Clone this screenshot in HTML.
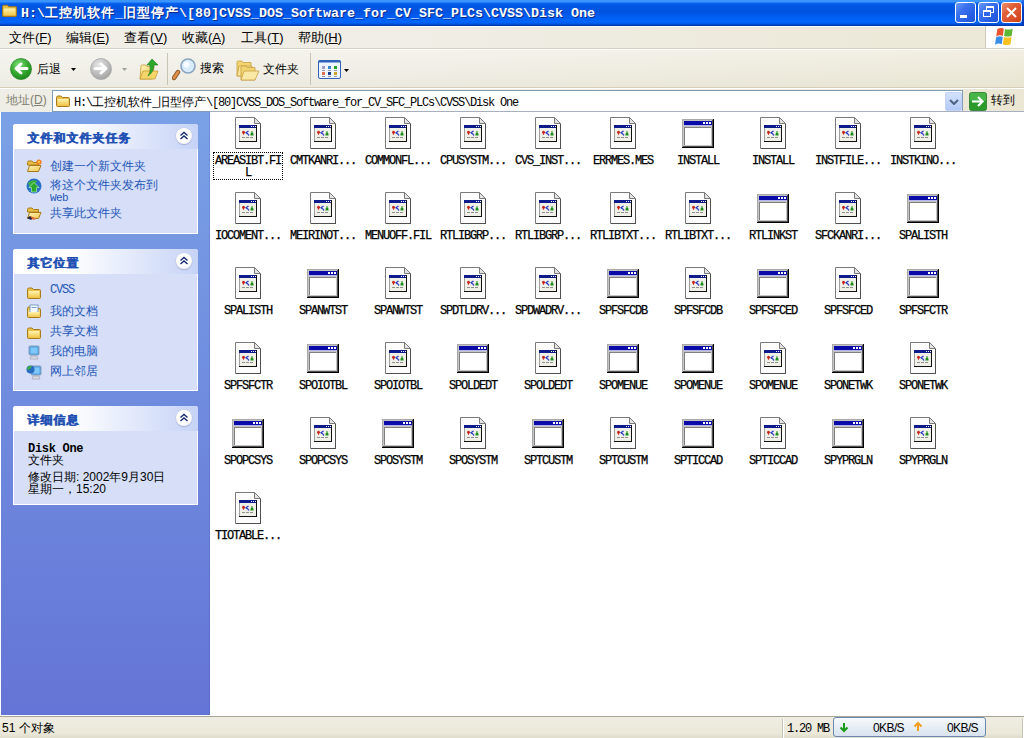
<!DOCTYPE html>
<html><head><meta charset="utf-8">
<style>
*{margin:0;padding:0;box-sizing:border-box}
html,body{width:1024px;height:738px;overflow:hidden;background:#fff;font-family:"Liberation Sans",sans-serif;font-size:12px;color:#000}
.a{position:absolute}
svg{display:block}
#title{left:0;top:0;width:1024px;height:26px;background:linear-gradient(#3c95ff 0px,#3c95ff 2px,#0a66f5 3px,#0058e6 5px,#0053de 12px,#005cf0 16px,#0066fd 22px,#0056e0 24px,#0040b8 25px,#0038a8 26px)}
#title .t{left:21px;top:4px;color:#fff;font:bold 13.33px "Liberation Mono",monospace;white-space:nowrap;text-shadow:1px 1px 0 #0a2a8a}
.cj{letter-spacing:1px}
.tb{top:2px;width:21px;height:21px;border:1px solid #fff;border-radius:3px;background:linear-gradient(135deg,#6a9cf8 0%,#3a72ee 35%,#2860e4 70%,#1f55d8 100%)}
#menu{left:0;top:26px;width:1024px;height:22px;background:linear-gradient(90deg,#f0efe8 0%,#efede4 45%,#ece8d6 100%);border-top:1px solid #f8f8ff}
#menu .m{top:2px;font-size:13px;white-space:nowrap}
#logo{left:985px;top:26px;width:39px;height:22px;background:#fff;border-left:1px solid #d0ccbc}
#tool{left:0;top:48px;width:1024px;height:40px;background:linear-gradient(rgba(255,255,255,0.35),rgba(255,255,255,0.1) 60%,rgba(0,0,0,0.01)),linear-gradient(90deg,#efeee6 0%,#eeece2 40%,#ebe7d4 100%);border-top:1px solid #d4d2c8;box-shadow:inset 0 1px #fdfdf8;border-bottom:1px solid #d6ceb8}
#addr{left:0;top:88px;width:1024px;height:24px;background:linear-gradient(90deg,#efeee6 0%,#eeece2 40%,#ebe7d4 100%);border-top:1px solid #fff}
#side{left:1px;top:112px;width:209px;height:603px;background:linear-gradient(#7aa1e6,#6474d6);box-shadow:inset -1px 0 rgba(20,30,90,0.1)}
#content{left:210px;top:111px;width:814px;height:605px;background:#fff;border-top:1px solid #a8b0c0}
.panel{left:12px;width:185px;background:#d6dff7;border:1px solid #fff;border-top:none;border-radius:3px 3px 0 0}
.ph{position:absolute;left:-1px;top:0;width:185px;height:25px;border-radius:3px 3px 0 0;background:linear-gradient(90deg,#fff 0%,#fff 30%,#c6d3f7 100%)}
.ph .h{position:absolute;left:14px;top:6px;font-weight:bold;color:#1e50b4;font-size:12px;letter-spacing:1px;text-shadow:0.5px 0 0 #1e50b4}
.cb{position:absolute;left:163px;top:4px;width:16px;height:16px;border-radius:50%;background:radial-gradient(circle at 45% 40%,#fff 55%,#eef0fa 75%,#c8cce8);box-shadow:0 0 0 0.5px #c0c4e0,0 1px 1px #a0a8d0}
.it{position:absolute;left:36px;color:#2456b8;white-space:nowrap;font-size:12px}
.si{position:absolute;left:12px}
.ic{position:absolute}
.lab{position:absolute;text-align:center;font:12px "Liberation Mono",monospace;letter-spacing:-1.2px;-webkit-text-stroke:0.25px #000;line-height:12px;white-space:nowrap;color:#000}
.focus{border:1px dotted #000;padding-top:2px;line-height:12px}
#status{left:0;top:716px;width:1024px;height:22px;background:linear-gradient(#efede2,#ebe8d9 80%,#dedbcb);border-top:1px solid #a9a595}
</style></head><body>
<svg width="0" height="0" style="position:absolute">
<defs>
<linearGradient id="fy" x1="0" y1="0" x2="0" y2="1"><stop offset="0" stop-color="#fff3b0"/><stop offset="1" stop-color="#f2c64a"/></linearGradient>
<linearGradient id="fy2" x1="0" y1="0" x2="1" y2="1"><stop offset="0" stop-color="#fff6c0"/><stop offset="1" stop-color="#f0c248"/></linearGradient>
<radialGradient id="gg" cx="0.4" cy="0.3" r="0.7"><stop offset="0" stop-color="#7ee07a"/><stop offset="0.6" stop-color="#36a830"/><stop offset="1" stop-color="#1f8a1f"/></radialGradient>
<radialGradient id="gr" cx="0.4" cy="0.3" r="0.7"><stop offset="0" stop-color="#e8e8e8"/><stop offset="0.6" stop-color="#bdbdbd"/><stop offset="1" stop-color="#a4a4a4"/></radialGradient>
<symbol id="doc" viewBox="0 0 32 32">
 <path d="M3.5 0.5H22.5L28.5 6.5V31.5H3.5Z" fill="#fcfcfc" stroke="#7a7a7a"/>
 <path d="M22.5 0.5V6.5H28.5Z" fill="#e4e4e4" stroke="#7a7a7a" stroke-linejoin="bevel"/>
 <rect x="4" y="31" width="25" height="1" fill="#505050"/>
 <rect x="28" y="7" width="1" height="25" fill="#505050"/>
 <rect x="7" y="8" width="17" height="16" fill="#f0efe8"/>
 <rect x="7" y="8" width="1" height="16" fill="#a0a0a0"/>
 <rect x="7" y="8" width="17" height="3" fill="#0c1a8c"/>
 <rect x="19" y="9" width="1" height="1" fill="#fff"/><rect x="21" y="9" width="1" height="1" fill="#fff"/><rect x="23" y="9" width="1" height="1" fill="#fff"/>
 <rect x="24" y="8" width="1" height="17" fill="#111"/><rect x="7" y="24" width="18" height="1" fill="#111"/>
 <path d="M10 15.3a1.5 1.5 0 1 1 3 0l-1.5 3z" fill="#c8281c"/>
 <path d="M16.5 14l-2.5 1.8 2.5 1.8" fill="none" stroke="#2232c0" stroke-width="1.2"/>
 <circle cx="16.6" cy="18" r="0.7" fill="#2232c0"/>
 <path d="M18.5 18.5v-1.8l1-1.2v-1.5h1v1.5l1 1.2v1.8z" fill="#1a901a"/>
 <rect x="10" y="20" width="3" height="1" fill="#909090"/><rect x="14" y="20" width="3" height="1" fill="#909090"/><rect x="18" y="20" width="3" height="1" fill="#909090"/>
</symbol>
<symbol id="win" viewBox="0 0 32 32">
 <rect x="0" y="2" width="32" height="29" fill="#c4c4c4"/>
 <rect x="0" y="2" width="31" height="1" fill="#a8a8a8"/>
 <rect x="0" y="2" width="1" height="28" fill="#a8a8a8"/>
 <rect x="30" y="3" width="1" height="27" fill="#505050"/>
 <rect x="1" y="29" width="30" height="1" fill="#505050"/>
 <rect x="31" y="2" width="1" height="29" fill="#000"/>
 <rect x="0" y="30" width="32" height="1" fill="#000"/>
 <rect x="2" y="4" width="28" height="4" fill="#0a0aa8"/>
 <rect x="2" y="8" width="28" height="1" fill="#b4b4f0"/>
 <rect x="21" y="5" width="2" height="2" fill="#fff"/><rect x="24" y="5" width="2" height="2" fill="#fff"/><rect x="27" y="5" width="2" height="2" fill="#fff"/>
 <rect x="2" y="10" width="27" height="1" fill="#808080"/>
 <rect x="2" y="10" width="1" height="18" fill="#808080"/>
 <rect x="3" y="11" width="26" height="17" fill="#fff"/>
</symbol>
<symbol id="fold" viewBox="0 0 16 16">
 <path d="M1.5 4.5 Q1.5 3 3 3H6l1.5 1.5H13.5Q14.5 4.5 14.5 5.5V12.5Q14.5 13.5 13.5 13.5H2.5Q1.5 13.5 1.5 12.5Z" fill="#e9c046" stroke="#a87a1c"/>
 <rect x="2.5" y="6" width="11" height="6.5" rx="0.5" fill="url(#fy)"/>
</symbol>
<symbol id="ofold" viewBox="0 0 16 16">
 <path d="M1.5 4.5Q1.5 3 3 3H6l1.5 1.5H12.5V7H1.5Z" fill="#e9c046" stroke="#a87a1c"/>
 <path d="M1.5 13.5L3.5 7.5H15L12.5 13.5Z" fill="url(#fy2)" stroke="#a87a1c"/>
</symbol>
<symbol id="chev" viewBox="0 0 16 16">
 <path d="M4.5 7.5l3.5-3 3.5 3M4.5 11l3.5-3 3.5 3" fill="none" stroke="#142a70" stroke-width="1.4"/>
</symbol>
</defs></svg>

<div id="title" class="a">
 <svg class="a" style="left:1px;top:2px" width="17" height="17" viewBox="0 0 16 16"><use href="#fold"/></svg>
 <div class="t a">H:\<span class="cj">工控机软件</span>_<span class="cj">旧型停产</span>\[80]CVSS_DOS_Software_for_CV_SFC_PLCs\CVSS\Disk One</div>
 <div class="a" style="left:1022px;top:0;width:2px;height:26px;background:linear-gradient(#2a70f0,#0040c8 30%,#0036b0)"></div>
 <div class="tb a" style="left:955px"><div class="a" style="left:4px;top:12px;width:7px;height:3px;background:#fff"></div></div>
 <div class="tb a" style="left:978px"><div class="a" style="left:7px;top:3px;width:8px;height:7px;border:1px solid #fff;border-top-width:2px"></div><div class="a" style="left:4px;top:7px;width:8px;height:7px;border:1px solid #fff;border-top-width:2px;background:#2f66e8"></div></div>
 <div class="tb a" style="left:1001px;background:linear-gradient(135deg,#ee9070 0%,#e0603a 35%,#d8502a 70%,#d04010 100%)"><svg class="a" style="left:3px;top:3px" width="13" height="13"><path d="M2 2L11 11M11 2L2 11" stroke="#fff" stroke-width="2"/></svg></div>
</div>
<div id="menu" class="a">
 <div class="m a" style="left:9px">文件(<u>F</u>)</div>
 <div class="m a" style="left:66px">编辑(<u>E</u>)</div>
 <div class="m a" style="left:124px">查看(<u>V</u>)</div>
 <div class="m a" style="left:182px">收藏(<u>A</u>)</div>
 <div class="m a" style="left:241px">工具(<u>T</u>)</div>
 <div class="m a" style="left:298px">帮助(<u>H</u>)</div>
</div>
<div id="logo" class="a">
 <svg class="a" style="left:8px;top:1px" width="22" height="20" viewBox="0 0 20 18" preserveAspectRatio="none">
  <path d="M3 2Q6 0 9 1.5L8 8Q5 6.5 2 8.5Z" fill="#e8542c"/>
  <path d="M10 1.8Q13 3 17 1.5L16 8Q12.5 9 9.2 8Z" fill="#5cb832"/>
  <path d="M1.8 9.5Q5 7.5 8 9L7 15.5Q4 14 1 16Z" fill="#3a8ee8"/>
  <path d="M9 9Q12.5 10 16 9L15 15.5Q11.5 17 8 15.5Z" fill="#f8c020"/>
 </svg>
</div>
<div id="tool" class="a">
 <svg class="a" style="left:10px;top:9px" width="22" height="22" viewBox="0 0 22 22"><circle cx="11" cy="11" r="10.5" fill="url(#gg)" stroke="#2a8a2a" stroke-width="0.8"/><path d="M17 10.5H7M11 6L6 10.5L11 15" fill="none" stroke="#fff" stroke-width="3" stroke-linecap="round" stroke-linejoin="round"/></svg>
 <div class="a" style="left:37px;top:12px">后退</div>
 <svg class="a" style="left:71px;top:19px" width="5" height="3"><path d="M0 0H5L2.5 3Z" fill="#000"/></svg>
 <svg class="a" style="left:90px;top:9px" width="22" height="22" viewBox="0 0 22 22"><circle cx="11" cy="11" r="10.5" fill="url(#gr)" stroke="#a8a8a8" stroke-width="0.8"/><path d="M5 10.5H15M11 6L16 10.5L11 15" fill="none" stroke="#fff" stroke-width="3" stroke-linecap="round" stroke-linejoin="round"/></svg>
 <svg class="a" style="left:122px;top:19px" width="5" height="3"><path d="M0 0H5L2.5 3Z" fill="#a0a0a0"/></svg>
 <svg class="a" style="left:139px;top:9px" width="20" height="22" viewBox="0 0 20 22">
  <path d="M1 21L2 8Q2 7 3 7H7l1 1.5H15L13 21Z" fill="url(#fy2)" stroke="#c89a30" stroke-width="0.8"/>
  <path d="M1 21L4 13H19L16 21Z" fill="#f6d66a" stroke="#c89a30" stroke-width="0.8"/>
  <path d="M9 18Q12 14 11 7H8L13 1L19 7H15Q15 14 9 18Z" fill="#2ca82c" stroke="#1a7a1a" stroke-width="0.6"/>
 </svg>
 <div class="a" style="left:167px;top:4px;width:1px;height:32px;background:#c8c4b4"></div>
 <svg class="a" style="left:172px;top:9px" width="25" height="23" viewBox="0 0 25 23">
  <path d="M6 14L2 20" stroke="#8a5a2a" stroke-width="4.5" stroke-linecap="round"/>
  <path d="M6 14L2 20" stroke="#e0904a" stroke-width="2.5" stroke-linecap="round"/>
  <circle cx="16" cy="8" r="7" fill="#d8ecfc" stroke="#8aa4c0" stroke-width="1.6"/>
  <circle cx="14.5" cy="6.5" r="3" fill="#fff" opacity="0.8"/>
 </svg>
 <div class="a" style="left:200px;top:11px">搜索</div>
 <svg class="a" style="left:236px;top:11px" width="24" height="21" viewBox="0 0 24 21">
  <path d="M1 16V2Q1 1 2 1H6l1 1.5H15V16Z" fill="#f2d470" stroke="#c8a040" stroke-width="0.8"/>
  <path d="M1 16L3 6H16L14 16Z" fill="#f8e49a" stroke="#c8a040" stroke-width="0.8"/>
  <path d="M5 20V7Q5 6 6 6H10l1 1.5H19V20Z" fill="#f2d470" stroke="#c8a040" stroke-width="0.8"/>
  <path d="M5 20L8 11H23L19 20Z" fill="#fae8a6" stroke="#c8a040" stroke-width="0.8"/>
 </svg>
 <div class="a" style="left:263px;top:12px">文件夹</div>
 <div class="a" style="left:310px;top:4px;width:1px;height:32px;background:#c8c4b4"></div>
 <svg class="a" style="left:318px;top:11px" width="24" height="19" viewBox="0 0 24 19">
  <rect x="0.5" y="0.5" width="22" height="18" rx="1.5" fill="#eef5fe" stroke="#2f62b8"/>
  <rect x="0.5" y="0.5" width="22" height="2" fill="#2f62b8"/>
  <rect x="4" y="6" width="3" height="3" fill="#a49ccc"/><rect x="10" y="6" width="3" height="3" fill="#3a82d2"/><rect x="16" y="6" width="3" height="3" fill="#22a022"/>
  <rect x="4" y="12" width="3" height="3" fill="#e07050"/><rect x="10" y="12" width="3" height="3" fill="#1c3c90"/><rect x="16" y="12" width="3" height="3" fill="#d0a030"/>
  <rect x="4" y="10" width="3" height="1" fill="#999"/><rect x="10" y="10" width="3" height="1" fill="#999"/><rect x="16" y="10" width="3" height="1" fill="#999"/>
  <rect x="4" y="16" width="3" height="1" fill="#999"/><rect x="10" y="16" width="3" height="1" fill="#999"/><rect x="16" y="16" width="3" height="1" fill="#999"/>
 </svg>
 <svg class="a" style="left:344px;top:20px" width="5" height="3"><path d="M0 0H5L2.5 3Z" fill="#000"/></svg>
</div>
<div id="addr" class="a">
 <div class="a" style="left:6px;top:3px;color:#808070">地址(<u>D</u>)</div>
 <div class="a" style="left:52px;top:1px;width:911px;height:22px;background:#fff;border:1px solid #7f9db9"></div>
 <svg class="a" style="left:55px;top:4px" width="16" height="16"><use href="#fold"/></svg>
 <div class="a" style="left:74px;top:5px;font:12px 'Liberation Mono',monospace;letter-spacing:-1.2px;white-space:nowrap">H:\<span style="letter-spacing:0">工控机软件</span>_<span style="letter-spacing:0">旧型停产</span>\[80]CVSS_DOS_Software_for_CV_SFC_PLCs\CVSS\Disk One</div>
 <div class="a" style="left:945px;top:3px;width:17px;height:19px;background:linear-gradient(#d4e2fc,#b2c8f6);border:1px solid #c2d2f4;border-radius:2px"><svg class="a" style="left:3px;top:6px" width="10" height="6"><path d="M1 1L5 5L9 1" fill="none" stroke="#4d6185" stroke-width="2"/></svg></div>
 <svg class="a" style="left:969px;top:3px" width="18" height="19" viewBox="0 0 18 19"><rect x="0.5" y="0.5" width="17" height="18" rx="2" fill="#2a9a2a" stroke="#3a8a3a"/><rect x="1" y="1" width="16" height="8" rx="1.5" fill="#46b446"/><path d="M3 9.5H13M9 5L13.5 9.5L9 14" fill="none" stroke="#fff" stroke-width="2.2"/></svg>
 <div class="a" style="left:991px;top:3px">转到</div>
</div>
<div id="side" class="a">
 <div class="panel a" style="top:12px;height:110px">
  <div class="ph"><div class="h">文件和文件夹任务</div><svg class="cb" width="16" height="16"><use href="#chev"/></svg></div>
  <svg class="si" style="top:34px" width="16" height="16"><use href="#ofold"/><circle cx="13" cy="4" r="2.6" fill="#f87a20"/><circle cx="13" cy="4" r="1.2" fill="#ffd040"/></svg>
  <svg class="si" style="top:54px" width="16" height="16" viewBox="0 0 16 16"><circle cx="8" cy="8" r="7.5" fill="#2a70c8"/><path d="M2 5Q6 1 11 3Q9 7 4 9Z" fill="#3cae3c"/><path d="M3 9.5L8 4.5L13 9.5H10.5V14H5.5V9.5Z" fill="#2aa82a" stroke="#c8ffc8" stroke-width="0.6"/></svg>
  <svg class="si" style="top:81px" width="16" height="16"><use href="#ofold"/><path d="M1 13L4 11L7 13L5 15Z" fill="#202040"/><path d="M4 11Q8 12 10 14L7 15Z" fill="#e0703a"/></svg>
  <div class="it" style="top:34px">创建一个新文件夹</div>
  <div class="it" style="top:53px">将这个文件夹发布到</div>
  <div class="it" style="top:68px;font:11px 'Liberation Mono',monospace;letter-spacing:-0.6px">Web</div>
  <div class="it" style="top:81px">共享此文件夹</div>
 </div>
 <div class="panel a" style="top:137px;height:142px">
  <div class="ph"><div class="h">其它位置</div><svg class="cb" width="16" height="16"><use href="#chev"/></svg></div>
  <svg class="si" style="top:36px" width="16" height="16"><use href="#fold"/></svg>
  <svg class="si" style="top:55px" width="16" height="16"><use href="#fold"/><rect x="4" y="1" width="8" height="10" fill="#f4f8ff" stroke="#6a8ab8" stroke-width="0.8"/><rect x="5.5" y="3" width="5" height="1" fill="#7aa0d0"/><rect x="2.5" y="8" width="11" height="5" fill="url(#fy)"/></svg>
  <svg class="si" style="top:76px" width="16" height="16"><use href="#fold"/></svg>
  <svg class="si" style="top:96px" width="16" height="16" viewBox="0 0 16 16"><rect x="3" y="1" width="10" height="9" rx="1" fill="#4aa0e8" stroke="#8aa0b8" stroke-width="1"/><rect x="4.5" y="2.5" width="7" height="6" fill="#80c8fa"/><path d="M5 11H11L12 14H4Z" fill="#d8d8e0" stroke="#9a9ab0" stroke-width="0.6"/></svg>
  <svg class="si" style="top:115px" width="16" height="16" viewBox="0 0 16 16"><rect x="5" y="2" width="10" height="9" rx="1" fill="#4aa0e8" stroke="#8aa0b8" stroke-width="1"/><rect x="6.5" y="3.5" width="7" height="6" fill="#80c8fa"/><path d="M7 12H13L14 15H6Z" fill="#d8d8e0" stroke="#9a9ab0" stroke-width="0.6"/><circle cx="4.5" cy="5.5" r="4" fill="#2a6cc0"/><path d="M1 4Q3 1 6 2Q5 5 2 6Z" fill="#3cae3c"/></svg>
  <div class="it" style="top:34px;font:12px 'Liberation Mono',monospace;letter-spacing:-1.2px">CVSS</div>
  <div class="it" style="top:54px">我的文档</div>
  <div class="it" style="top:74px">共享文档</div>
  <div class="it" style="top:94px">我的电脑</div>
  <div class="it" style="top:114px">网上邻居</div>
 </div>
 <div class="panel a" style="top:294px;height:99px">
  <div class="ph"><div class="h">详细信息</div><svg class="cb" width="16" height="16"><use href="#chev"/></svg></div>
  <div class="a" style="left:14px;top:36px;font:bold 12px 'Liberation Mono',monospace;letter-spacing:-0.3px">Disk One</div>
  <div class="a" style="left:14px;top:46px">文件夹</div>
  <div class="a" style="left:14px;top:63px">修改日期: 2002年9月30日</div>
  <div class="a" style="left:14px;top:75px">星期一，15:20</div>
 </div>
</div>
<div id="content" class="a"></div>
<svg class="ic" style="left:232px;top:117px" width="32" height="32"><use href="#doc"/></svg><div class="lab focus" style="left:213px;top:152px;width:70px">AREASIBT.FI<br>L</div>
<svg class="ic" style="left:307px;top:117px" width="32" height="32"><use href="#doc"/></svg><div class="lab" style="left:283px;top:155px;width:80px">CMTKANRI...</div>
<svg class="ic" style="left:382px;top:117px" width="32" height="32"><use href="#doc"/></svg><div class="lab" style="left:358px;top:155px;width:80px">COMMONFL...</div>
<svg class="ic" style="left:457px;top:117px" width="32" height="32"><use href="#doc"/></svg><div class="lab" style="left:433px;top:155px;width:80px">CPUSYSTM...</div>
<svg class="ic" style="left:532px;top:117px" width="32" height="32"><use href="#doc"/></svg><div class="lab" style="left:508px;top:155px;width:80px">CVS_INST...</div>
<svg class="ic" style="left:607px;top:117px" width="32" height="32"><use href="#doc"/></svg><div class="lab" style="left:583px;top:155px;width:80px">ERRMES.MES</div>
<svg class="ic" style="left:682px;top:117px" width="32" height="32"><use href="#win"/></svg><div class="lab" style="left:658px;top:155px;width:80px">INSTALL</div>
<svg class="ic" style="left:757px;top:117px" width="32" height="32"><use href="#doc"/></svg><div class="lab" style="left:733px;top:155px;width:80px">INSTALL</div>
<svg class="ic" style="left:832px;top:117px" width="32" height="32"><use href="#doc"/></svg><div class="lab" style="left:808px;top:155px;width:80px">INSTFILE...</div>
<svg class="ic" style="left:907px;top:117px" width="32" height="32"><use href="#doc"/></svg><div class="lab" style="left:883px;top:155px;width:80px">INSTKINO...</div>
<svg class="ic" style="left:232px;top:192px" width="32" height="32"><use href="#doc"/></svg><div class="lab" style="left:208px;top:230px;width:80px">IOCOMENT...</div>
<svg class="ic" style="left:307px;top:192px" width="32" height="32"><use href="#doc"/></svg><div class="lab" style="left:283px;top:230px;width:80px">MEIRINOT...</div>
<svg class="ic" style="left:382px;top:192px" width="32" height="32"><use href="#doc"/></svg><div class="lab" style="left:358px;top:230px;width:80px">MENUOFF.FIL</div>
<svg class="ic" style="left:457px;top:192px" width="32" height="32"><use href="#doc"/></svg><div class="lab" style="left:433px;top:230px;width:80px">RTLIBGRP...</div>
<svg class="ic" style="left:532px;top:192px" width="32" height="32"><use href="#doc"/></svg><div class="lab" style="left:508px;top:230px;width:80px">RTLIBGRP...</div>
<svg class="ic" style="left:607px;top:192px" width="32" height="32"><use href="#doc"/></svg><div class="lab" style="left:583px;top:230px;width:80px">RTLIBTXT...</div>
<svg class="ic" style="left:682px;top:192px" width="32" height="32"><use href="#doc"/></svg><div class="lab" style="left:658px;top:230px;width:80px">RTLIBTXT...</div>
<svg class="ic" style="left:757px;top:192px" width="32" height="32"><use href="#win"/></svg><div class="lab" style="left:733px;top:230px;width:80px">RTLINKST</div>
<svg class="ic" style="left:832px;top:192px" width="32" height="32"><use href="#doc"/></svg><div class="lab" style="left:808px;top:230px;width:80px">SFCKANRI...</div>
<svg class="ic" style="left:907px;top:192px" width="32" height="32"><use href="#win"/></svg><div class="lab" style="left:883px;top:230px;width:80px">SPALISTH</div>
<svg class="ic" style="left:232px;top:267px" width="32" height="32"><use href="#doc"/></svg><div class="lab" style="left:208px;top:305px;width:80px">SPALISTH</div>
<svg class="ic" style="left:307px;top:267px" width="32" height="32"><use href="#win"/></svg><div class="lab" style="left:283px;top:305px;width:80px">SPANWTST</div>
<svg class="ic" style="left:382px;top:267px" width="32" height="32"><use href="#doc"/></svg><div class="lab" style="left:358px;top:305px;width:80px">SPANWTST</div>
<svg class="ic" style="left:457px;top:267px" width="32" height="32"><use href="#doc"/></svg><div class="lab" style="left:433px;top:305px;width:80px">SPDTLDRV...</div>
<svg class="ic" style="left:532px;top:267px" width="32" height="32"><use href="#doc"/></svg><div class="lab" style="left:508px;top:305px;width:80px">SPDWADRV...</div>
<svg class="ic" style="left:607px;top:267px" width="32" height="32"><use href="#win"/></svg><div class="lab" style="left:583px;top:305px;width:80px">SPFSFCDB</div>
<svg class="ic" style="left:682px;top:267px" width="32" height="32"><use href="#doc"/></svg><div class="lab" style="left:658px;top:305px;width:80px">SPFSFCDB</div>
<svg class="ic" style="left:757px;top:267px" width="32" height="32"><use href="#win"/></svg><div class="lab" style="left:733px;top:305px;width:80px">SPFSFCED</div>
<svg class="ic" style="left:832px;top:267px" width="32" height="32"><use href="#doc"/></svg><div class="lab" style="left:808px;top:305px;width:80px">SPFSFCED</div>
<svg class="ic" style="left:907px;top:267px" width="32" height="32"><use href="#win"/></svg><div class="lab" style="left:883px;top:305px;width:80px">SPFSFCTR</div>
<svg class="ic" style="left:232px;top:342px" width="32" height="32"><use href="#doc"/></svg><div class="lab" style="left:208px;top:380px;width:80px">SPFSFCTR</div>
<svg class="ic" style="left:307px;top:342px" width="32" height="32"><use href="#win"/></svg><div class="lab" style="left:283px;top:380px;width:80px">SPOIOTBL</div>
<svg class="ic" style="left:382px;top:342px" width="32" height="32"><use href="#doc"/></svg><div class="lab" style="left:358px;top:380px;width:80px">SPOIOTBL</div>
<svg class="ic" style="left:457px;top:342px" width="32" height="32"><use href="#win"/></svg><div class="lab" style="left:433px;top:380px;width:80px">SPOLDEDT</div>
<svg class="ic" style="left:532px;top:342px" width="32" height="32"><use href="#doc"/></svg><div class="lab" style="left:508px;top:380px;width:80px">SPOLDEDT</div>
<svg class="ic" style="left:607px;top:342px" width="32" height="32"><use href="#win"/></svg><div class="lab" style="left:583px;top:380px;width:80px">SPOMENUE</div>
<svg class="ic" style="left:682px;top:342px" width="32" height="32"><use href="#win"/></svg><div class="lab" style="left:658px;top:380px;width:80px">SPOMENUE</div>
<svg class="ic" style="left:757px;top:342px" width="32" height="32"><use href="#doc"/></svg><div class="lab" style="left:733px;top:380px;width:80px">SPOMENUE</div>
<svg class="ic" style="left:832px;top:342px" width="32" height="32"><use href="#win"/></svg><div class="lab" style="left:808px;top:380px;width:80px">SPONETWK</div>
<svg class="ic" style="left:907px;top:342px" width="32" height="32"><use href="#doc"/></svg><div class="lab" style="left:883px;top:380px;width:80px">SPONETWK</div>
<svg class="ic" style="left:232px;top:417px" width="32" height="32"><use href="#win"/></svg><div class="lab" style="left:208px;top:455px;width:80px">SPOPCSYS</div>
<svg class="ic" style="left:307px;top:417px" width="32" height="32"><use href="#doc"/></svg><div class="lab" style="left:283px;top:455px;width:80px">SPOPCSYS</div>
<svg class="ic" style="left:382px;top:417px" width="32" height="32"><use href="#win"/></svg><div class="lab" style="left:358px;top:455px;width:80px">SPOSYSTM</div>
<svg class="ic" style="left:457px;top:417px" width="32" height="32"><use href="#doc"/></svg><div class="lab" style="left:433px;top:455px;width:80px">SPOSYSTM</div>
<svg class="ic" style="left:532px;top:417px" width="32" height="32"><use href="#win"/></svg><div class="lab" style="left:508px;top:455px;width:80px">SPTCUSTM</div>
<svg class="ic" style="left:607px;top:417px" width="32" height="32"><use href="#doc"/></svg><div class="lab" style="left:583px;top:455px;width:80px">SPTCUSTM</div>
<svg class="ic" style="left:682px;top:417px" width="32" height="32"><use href="#win"/></svg><div class="lab" style="left:658px;top:455px;width:80px">SPTICCAD</div>
<svg class="ic" style="left:757px;top:417px" width="32" height="32"><use href="#doc"/></svg><div class="lab" style="left:733px;top:455px;width:80px">SPTICCAD</div>
<svg class="ic" style="left:832px;top:417px" width="32" height="32"><use href="#win"/></svg><div class="lab" style="left:808px;top:455px;width:80px">SPYPRGLN</div>
<svg class="ic" style="left:907px;top:417px" width="32" height="32"><use href="#doc"/></svg><div class="lab" style="left:883px;top:455px;width:80px">SPYPRGLN</div>
<svg class="ic" style="left:232px;top:492px" width="32" height="32"><use href="#doc"/></svg><div class="lab" style="left:208px;top:530px;width:80px">TIOTABLE...</div>
<div id="status" class="a">
 <div class="a" style="left:2px;top:3px">51 个对象</div>
 <div class="a" style="left:782px;top:2px;width:1px;height:19px;background:#c8c4b4;box-shadow:1px 0 #fff"></div>
 <div class="a" style="left:787px;top:5px;font:12px 'Liberation Mono',monospace;letter-spacing:-1.2px">1.20 MB</div>
 <div class="a" style="left:833px;top:0px;width:153px;height:20px;border:1px solid #6a88b0;border-radius:3px;background:linear-gradient(#f6f9fc,#e4ecf4 60%,#d8e2ee)"></div>
 <svg class="a" style="left:839px;top:5px" width="10" height="11" viewBox="0 0 10 11"><path d="M5 1V9M1.5 5.5L5 9L8.5 5.5" fill="none" stroke="#1a9a1a" stroke-width="2"/></svg>
 <svg class="a" style="left:913px;top:4px" width="10" height="11" viewBox="0 0 10 11"><path d="M5 10V2M1.5 5.5L5 2L8.5 5.5" fill="none" stroke="#f0a020" stroke-width="2"/></svg>
 <div class="a" style="left:873px;top:4px;letter-spacing:-0.6px">0KB/S</div>
 <div class="a" style="left:947px;top:4px;letter-spacing:-0.6px">0KB/S</div>
 <div class="a" style="left:1022px;top:2px;width:1px;height:19px;background:#c8c4b4;box-shadow:1px 0 #fff"></div>
</div>
</body></html>
